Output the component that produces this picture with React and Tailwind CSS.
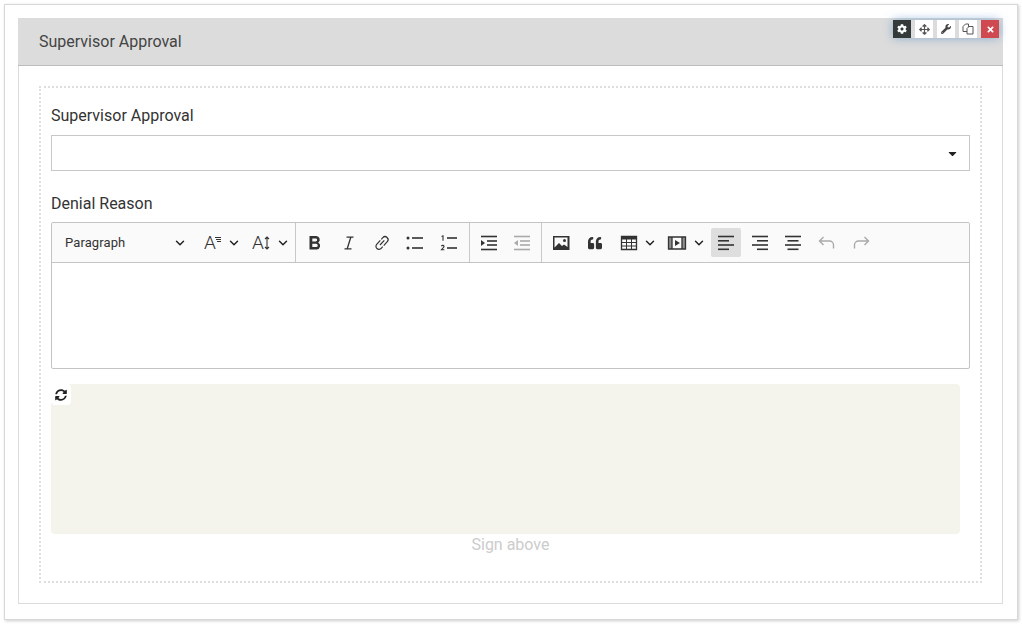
import { FaCog, FaArrowsAlt, FaWrench, FaTimes, FaSyncAlt, FaQuoteLeft, FaCaretDown } from "react-icons/fa";
import { ChevronDown } from "lucide-react";

const Chevron = () => <ChevronDown className="w-[14px] h-[14px] text-[#222] shrink-0" strokeWidth={2.5} />;

const Svg = ({ children, className = "text-[#333]" }) => (
  <svg width="20" height="20" viewBox="0 0 20 20" fill="none" stroke="currentColor" className={className}>
    {children}
  </svg>
);

const Lines = ({ rows }) => rows.map(([x1, x2, y], i) => <path key={i} d={`M${x1} ${y}H${x2}`} strokeWidth="1.6" />);

const icons = {
  bold: (
    <Svg>
      <path d="M4.500 3h6.800a3.500 3.500 0 0 1 1.900 6.400 3.800 3.800 0 0 1-1.500 7.100H4.500zM7.300 5.500v2.900h3.400a1.450 1.450 0 0 0 0-2.900zM7.300 10.800v3.300h3.800a1.650 1.650 0 0 0 0-3.300z" fill="currentColor" stroke="none" fillRule="evenodd" />
    </Svg>
  ),
  italic: (
    <Svg>
      <path d="M7.500 4.200h7M5.500 15.800h7M11.800 4.200 8.200 15.800" strokeWidth="1.300" />
    </Svg>
  ),
  link: (
    <Svg>
      <path d="m8 12 4.300-4.600M9.300 6.300l1.500-1.600a3 3 0 0 1 4.500 4l-3.600 4M10.700 13.700l-1.500 1.600a3 3 0 0 1-4.500-4l3.600-4" strokeWidth="1.200" />
    </Svg>
  ),
  ul: (
    <Svg>
      <Lines rows={[[7, 18, 5], [7, 18, 15]]} />
      <circle cx="3" cy="5" r="1.500" fill="currentColor" stroke="none" />
      <circle cx="3" cy="15" r="1.500" fill="currentColor" stroke="none" />
    </Svg>
  ),
  ol: (
    <Svg>
      <Lines rows={[[8, 18, 5], [8, 18, 15]]} />
      <path d="M2.600 3.400 4 2.800v5" strokeWidth="1.100" />
      <path d="M2.400 13.200c.6-1.300 3-1 2.600.5-.2.8-1.600 1.600-2.600 3h2.900" strokeWidth="1.100" />
    </Svg>
  ),
  indent: (
    <Svg>
      <Lines rows={[[2, 18, 3.500], [8, 18, 8], [8, 18, 12], [2, 18, 16.500]]} />
      <path d="M2 7v6l4-3z" fill="currentColor" stroke="none" />
    </Svg>
  ),
  outdent: (
    <Svg className="text-[#aaa]">
      <Lines rows={[[2, 18, 3.500], [8, 18, 8], [8, 18, 12], [2, 18, 16.500]]} />
      <path d="M6 7v6l-4-3z" fill="currentColor" stroke="none" />
    </Svg>
  ),
  image: (
    <Svg>
      <path d="M2 3h16.500v14H2zM3.500 4.500v10l4.500-4.500 3 3 2-1.500 3.500 2.500V4.500z" fill="currentColor" stroke="none" fillRule="evenodd" />
      <circle cx="13.500" cy="7.500" r="1.500" fill="currentColor" stroke="none" />
    </Svg>
  ),
  table: (
    <Svg>
      <path d="M2.500 3.500h15v13h-15z" strokeWidth="1.300" />
      <path d="M2.500 3.500h15v3h-15z" fill="currentColor" stroke="none" />
      <path d="M2.500 9.500h15M2.500 13h15M7.500 6v10M12.500 6v10" strokeWidth="1" />
    </Svg>
  ),
  media: (
    <Svg>
      <path d="M1.500 4h17v12h-17z" strokeWidth="1.300" />
      <path d="M5 4v12M15 4v12" strokeWidth="1.300" />
      <path d="M1.500 4h3.500v12H1.500zM15 4h3.500v12H15z" fill="currentColor" stroke="none" opacity=".55" />
      <path d="M8 7v6l5-3z" fill="currentColor" stroke="none" />
    </Svg>
  ),
  left: (
    <Svg>
      <Lines rows={[[2, 18, 3.500], [2, 13, 7.800], [2, 18, 12], [2, 13, 16.300]]} />
    </Svg>
  ),
  right: (
    <Svg>
      <Lines rows={[[2, 18, 3.500], [7, 18, 7.800], [2, 18, 12], [7, 18, 16.300]]} />
    </Svg>
  ),
  center: (
    <Svg>
      <Lines rows={[[2, 18, 3.500], [4.500, 15.500, 7.800], [2, 18, 12], [4.500, 15.500, 16.300]]} />
    </Svg>
  ),
  undo: (
    <Svg className="text-[#aaa]">
      <path d="M6.500 4 2.500 8l4 4M2.500 8h10a4 4 0 0 1 4 4v3.500" strokeWidth="1.400" />
    </Svg>
  ),
  redo: (
    <Svg className="text-[#aaa]">
      <path d="m13.500 4 4 4-4 4M17.500 8h-10a4 4 0 0 0-4 4v3.500" strokeWidth="1.400" />
    </Svg>
  ),
};

const ToolButton = ({ name, active, width = "w-[34px]" }) => (
  <div className={`${width} h-[29px] flex items-center justify-center rounded-[2px] ${active ? "bg-[#dedede]" : ""}`}>
    {icons[name]}
  </div>
);

const Divider = () => <div className="w-px self-stretch bg-[#c8c8c8]" />;

const Toolbar = () => (
  <div className="h-10 flex items-stretch bg-[#fafafa] border-b border-[#c4c4c4] rounded-t-[2px]">
    <div className="w-[243px] flex items-center pl-[13px]">
      <span className="w-[108px] text-[13px] tracking-[0.1px] text-[#333]">Paragraph</span>
      <Chevron />
      <span className="ml-[17px] text-[19px] leading-none text-[#333] font-light">A</span>
      <svg width="6" height="14" viewBox="0 0 6 14" stroke="currentColor" className="-ml-px text-[#333]">
        <path d="M0 1.500h6M1 3.500h5M2 5.500h4" strokeWidth="1" />
      </svg>
      <div className="ml-[6px]"><Chevron /></div>
      <span className="ml-[11px] text-[19px] leading-none text-[#333] font-light">A</span>
      <svg width="6" height="14" viewBox="0 0 6 14" fill="none" stroke="currentColor" className="text-[#333]">
        <path d="M3 1v12M1 3l2-2 2 2M1 11l2 2 2-2" strokeWidth="1.100" />
      </svg>
      <div className="ml-[6px]"><Chevron /></div>
    </div>
    <Divider />
    <div className="flex items-center pl-[2px] w-[173px]">
      <ToolButton name="bold" />
      <ToolButton name="italic" />
      <ToolButton name="link" width="w-[32px]" />
      <ToolButton name="ul" />
      <ToolButton name="ol" />
    </div>
    <Divider />
    <div className="flex items-center pl-[2px] w-[71px]">
      <ToolButton name="indent" />
      <ToolButton name="outdent" width="w-[32px]" />
    </div>
    <Divider />
    <div className="flex items-center pl-[2px]">
      <ToolButton name="image" />
      <div className="w-[34px] flex justify-center">
        <FaQuoteLeft className="w-[16px] h-[14px] text-[#333]" />
      </div>
      <ToolButton name="table" />
      <div className="-ml-[3px]"><Chevron /></div>
      <div className="ml-[5px]"><ToolButton name="media" width="w-[30px]" /></div>
      <Chevron />
      <div className="ml-[5px] flex items-center">
        <ToolButton name="left" active width="w-[30px]" />
        <ToolButton name="right" width="w-[38px]" />
        <ToolButton name="center" width="w-[28px]" />
        <ToolButton name="undo" width="w-[40px]" />
        <ToolButton name="redo" width="w-[28px]" />
      </div>
    </div>
  </div>
);

const ActionButton = ({ className, children }) => (
  <div className={`w-[18px] h-[18px] flex items-center justify-center ${className}`}>{children}</div>
);

const App = () => {
  return (
    <div className="w-[1022px] h-[624px] bg-white p-1 font-['Roboto',sans-serif] text-[#333]">
      <div className="h-[616px] border border-[#d8d8d8] shadow-[1px_1px_3px_rgba(0,0,0,0.2)] pt-[13px] px-[13px] bg-white">
        <div className="relative w-[985px] h-[586px] border border-[#dcdcdc] border-t-0 bg-white">
          <div className="h-[48px] bg-[#dcdcdc] border-b border-[#bdbdbd] flex items-center pl-[21px] pt-[1px] -mx-px">
            <span className="text-base text-[#444]">Supervisor Approval</span>
          </div>

          <div className="absolute top-[2px] right-[3px] flex gap-1 shadow-[0_0_10px_rgba(70,130,190,0.55)]">
            <ActionButton className="bg-[#343a3a]"><FaCog className="w-[10px] h-[10px] text-white" /></ActionButton>
            <ActionButton className="bg-white"><FaArrowsAlt className="w-[11px] h-[11px] text-[#555]" /></ActionButton>
            <ActionButton className="bg-white"><FaWrench className="w-[10px] h-[10px] text-[#444]" /></ActionButton>
            <ActionButton className="bg-white">
              <svg width="12" height="12" viewBox="0 0 12 12" fill="none" stroke="currentColor" className="text-[#555]">
                <path d="M1 3.500 3.500 1h3v7.500H1z" strokeWidth="1" />
                <path d="M5 5.500 7 3.500h4V11H5z" strokeWidth="1" fill="white" />
              </svg>
            </ActionButton>
            <ActionButton className="bg-[#cf4a50]"><FaTimes className="w-[9px] h-[9px] text-white" /></ActionButton>
          </div>

          <div className="mt-[20px] ml-[20px] w-[943px] h-[497px] border-2 border-dotted border-[#dedede] px-[10px] pt-[18px]">
            <div className="text-base leading-[20px] text-[#333]">Supervisor Approval</div>
            <div className="mt-[9px] w-[919px] h-[36px] border border-[#c8c8c8] flex items-center justify-end pr-[10px]">
              <FaCaretDown className="w-[13px] h-[13px] text-[#222]" />
            </div>

            <div className="mt-[23px] text-base leading-[20px] text-[#333]">Denial Reason</div>
            <div className="mt-[8px] w-[919px] h-[147px] border border-[#c4c4c4] rounded-[2px] bg-white">
              <Toolbar />
            </div>

            <div className="relative mt-[15px] w-[909px] h-[150px] bg-[#f5f4ec] rounded-[4px]">
              <div className="absolute top-0 left-0 w-[20px] h-[21px] bg-white rounded-[4px] flex items-center justify-center">
                <FaSyncAlt className="w-[12px] h-[12px] text-[#222]" />
              </div>
            </div>
            <div className="w-[919px] mt-[1px] text-center text-base leading-[20px] text-[#cccccc]">Sign above</div>
          </div>
        </div>
      </div>
    </div>
  );
};

export default App;
